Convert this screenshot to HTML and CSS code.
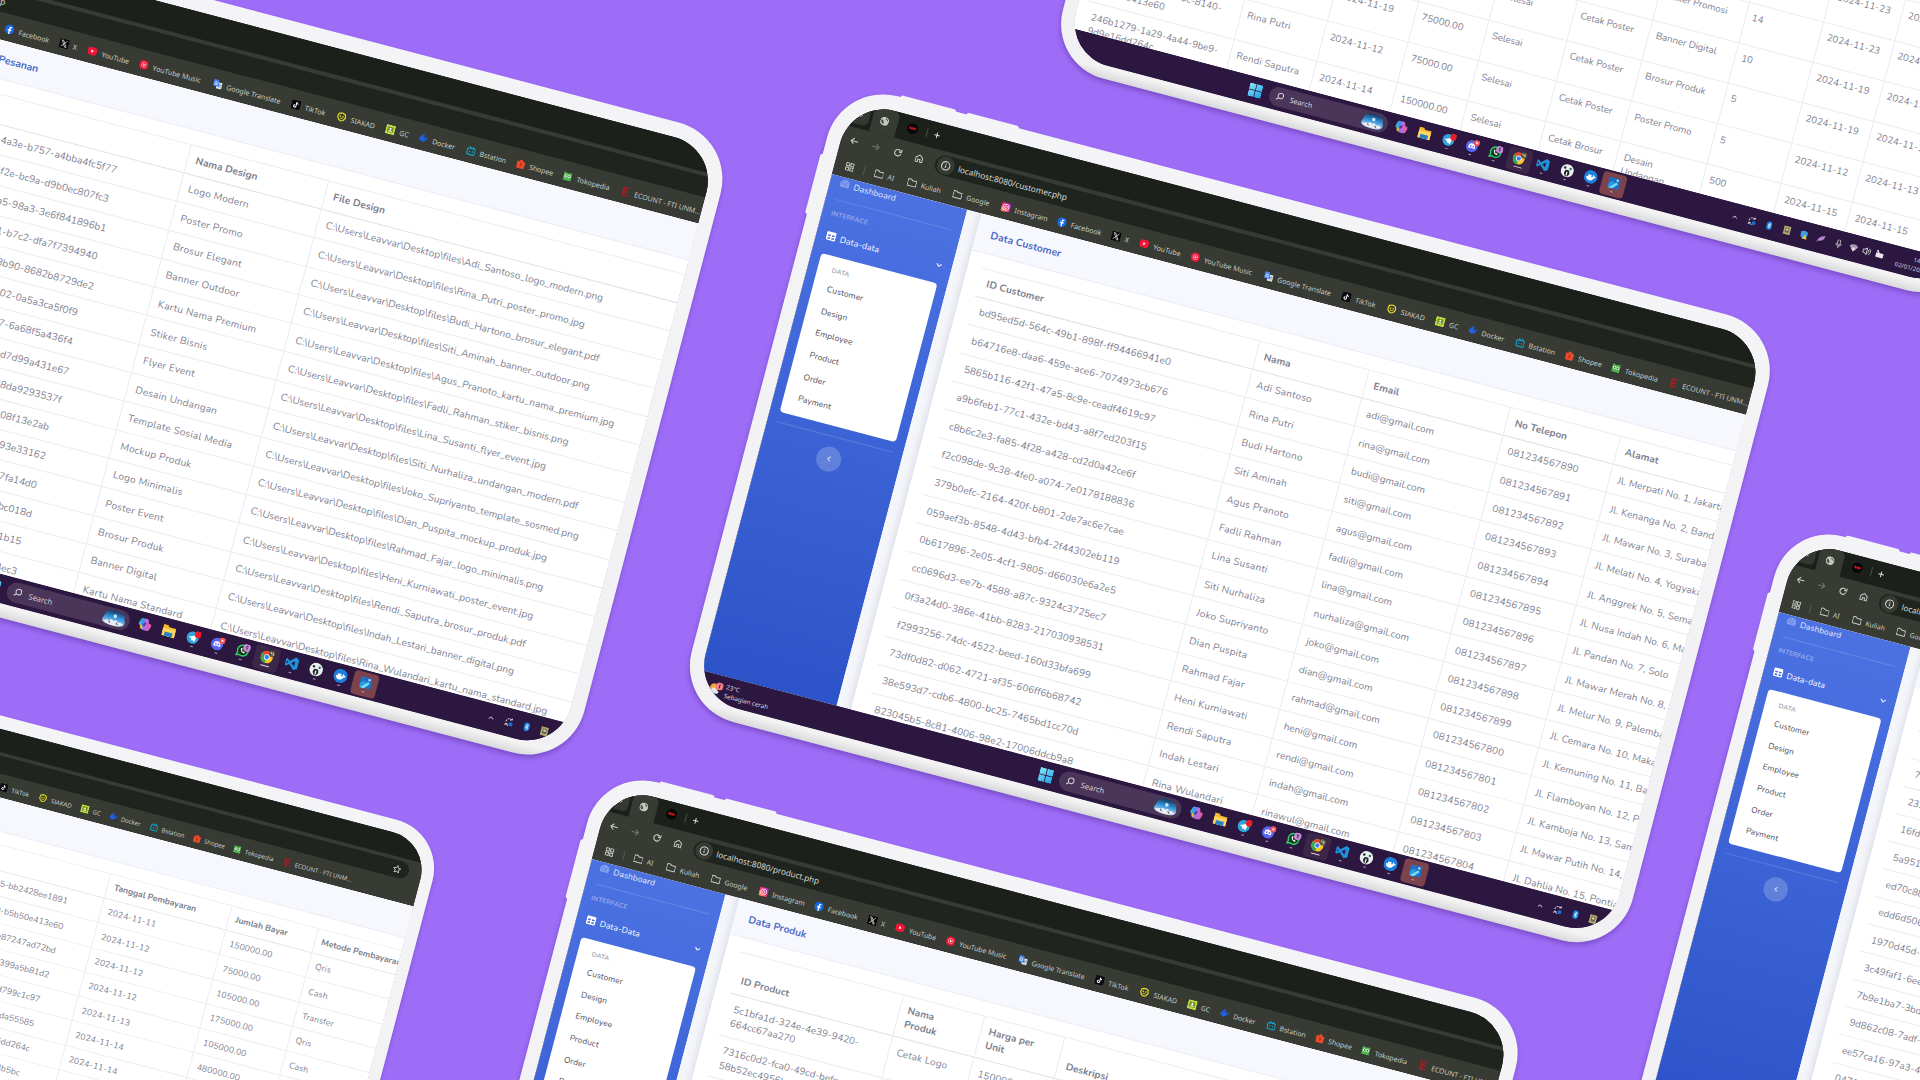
FILE: index.html
```html
<!DOCTYPE html>
<html lang="id">
<head>
<meta charset="utf-8">
<title>Data Customer</title>
<link rel="stylesheet" href="styles.css">
</head>
<body>
<svg class="sprite" aria-hidden="true">
  <defs>
    <linearGradient id="gInsta" x1="0" y1="1" x2="1" y2="0"><stop offset="0" stop-color="#ffc93c"/><stop offset=".45" stop-color="#f7276b"/><stop offset="1" stop-color="#a52be0"/></linearGradient>
    <linearGradient id="gCop" x1="0" y1="0" x2="1" y2="0"><stop offset="0" stop-color="#35c7c9"/><stop offset=".3" stop-color="#3d8ef0"/><stop offset=".55" stop-color="#b96be8"/><stop offset="1" stop-color="#f2568f"/></linearGradient>
    <linearGradient id="gWin" x1="0" y1="0" x2="1" y2="1"><stop offset="0" stop-color="#8be6fb"/><stop offset="1" stop-color="#1fa0e6"/></linearGradient>
    <linearGradient id="gScene" x1="0" y1="0" x2="0" y2="1"><stop offset="0" stop-color="#123a63"/><stop offset=".5" stop-color="#3c9be0"/><stop offset="1" stop-color="#d9dbe6"/></linearGradient>
  </defs>
  <symbol id="i-chev" viewBox="0 0 24 24"><path d="M4 8l8 8 8-8" fill="none" stroke="currentColor" stroke-width="3.4"/></symbol>
  <symbol id="i-left" viewBox="0 0 24 24"><path d="M15 5l-7 7 7 7" fill="none" stroke="currentColor" stroke-width="4"/></symbol>
  <symbol id="i-up" viewBox="0 0 24 24"><path d="M4 16l8-8 8 8" fill="none" stroke="currentColor" stroke-width="3"/></symbol>
  <symbol id="i-globe" viewBox="0 0 24 24"><circle cx="12" cy="12" r="12" fill="#c3c7c0"/><path d="M3 9c4 0 6 1 6 3s2 1 2 4-2 2-2 4C5 19 2 15 3 9zM14 3c-1 3 0 4 2 4s2 4 5 4c0-4-3-7-7-8z" fill="#4a4f48"/></symbol>
  <symbol id="i-red" viewBox="0 0 24 24"><circle cx="12" cy="12" r="12" fill="#070707"/><path d="M5 13l2-3 2 3 3-3 2 3 3-3 2 3" fill="none" stroke="#c9161e" stroke-width="3"/></symbol>
  <symbol id="i-plus" viewBox="0 0 24 24"><path d="M12 3v18M3 12h18" stroke="currentColor" stroke-width="3.2"/></symbol>
  <symbol id="i-back" viewBox="0 0 24 24"><path d="M22 12H3M11 4l-8 8 8 8" fill="none" stroke="currentColor" stroke-width="2.8"/></symbol>
  <symbol id="i-fwd" viewBox="0 0 24 24"><path d="M2 12h19M13 4l8 8-8 8" fill="none" stroke="currentColor" stroke-width="2.8"/></symbol>
  <symbol id="i-reload" viewBox="0 0 24 24"><path d="M20 13a8.5 8.5 0 1 1-2.4-7M21 2v7h-7" fill="none" stroke="currentColor" stroke-width="3"/></symbol>
  <symbol id="i-home" viewBox="0 0 24 24"><path d="M3 10l9-7 9 7v12h-6v-7H9v7H3z" fill="none" stroke="currentColor" stroke-width="2.6"/></symbol>
  <symbol id="i-info" viewBox="0 0 24 24"><circle cx="12" cy="12" r="10" fill="none" stroke="currentColor" stroke-width="2.6"/><path d="M12 11v6M12 6.5v2.5" stroke="currentColor" stroke-width="2.6"/></symbol>
  <symbol id="i-apps" viewBox="0 0 24 24"><path d="M2 2h8v8H2zM14 2h8v8h-8zM2 14h8v8H2zM14 14h8v8h-8z" fill="none" stroke="currentColor" stroke-width="2.6"/></symbol>
  <symbol id="i-folder" viewBox="0 0 24 24"><path d="M1 4h8l3 3h11v14H1z" fill="none" stroke="currentColor" stroke-width="2.6" stroke-linejoin="round"/></symbol>
  <symbol id="i-star" viewBox="0 0 24 24"><path d="M12 2l3 7 7 .7-5.300 4.800L18.300 22 12 18l-6.300 4 1.600-7.500L2 9.700 9 9z" fill="none" stroke="currentColor" stroke-width="2.2"/></symbol>
  <symbol id="i-instagram" viewBox="0 0 24 24"><rect width="24" height="24" rx="6" fill="url(#gInsta)"/><rect x="5" y="5" width="14" height="14" rx="4" fill="none" stroke="#fff" stroke-width="2"/><circle cx="12" cy="12" r="3.300" fill="none" stroke="#fff" stroke-width="2"/></symbol>
  <symbol id="i-facebook" viewBox="0 0 24 24"><circle cx="12" cy="12" r="12" fill="#1668e8"/><path d="M10.500 24v-8.500H7.500V12h3V9.500C10.500 6.500 12 5 15 5h2v3.300h-1.600c-1.300 0-1.600.6-1.600 1.600V12H17l-.5 3.500h-2.700V24z" fill="#fff"/></symbol>
  <symbol id="i-x" viewBox="0 0 24 24"><rect width="24" height="24" fill="#050505"/><path d="M5 4h4l10 16h-4zM19 4L5 20" fill="none" stroke="#ddd" stroke-width="1.800"/></symbol>
  <symbol id="i-youtube" viewBox="0 0 24 24"><rect x="0" y="2" width="24" height="20" rx="8" fill="#f01638"/><path d="M9.500 8l6.500 4-6.500 4z" fill="#fff"/></symbol>
  <symbol id="i-ytmusic" viewBox="0 0 24 24"><circle cx="12" cy="12" r="12" fill="#f01638"/><circle cx="12" cy="12" r="6" fill="none" stroke="#ffd0d6" stroke-width="1.500"/><path d="M10 8.500l5.500 3.500-5.500 3.500z" fill="#fff"/></symbol>
  <symbol id="i-translate" viewBox="0 0 24 24"><rect x="9" y="7" width="15" height="16" rx="2" fill="#dfe3ea"/><path d="M0 1h12l5 17H2a2 2 0 0 1-2-2z" fill="#4b86ee"/><path d="M10 9a3.500 3.500 0 1 0 .5 2H7.500" fill="none" stroke="#fff" stroke-width="1.600"/><path d="M15 13h7M18.500 11v2M21 13c-1 4-3 5-5 6" stroke="#777f8d" stroke-width="1.300" fill="none"/></symbol>
  <symbol id="i-tiktok" viewBox="0 0 24 24"><rect width="24" height="24" rx="5" fill="#0b0a10"/><path d="M13 5v10.500a3 3 0 1 1-3-3M13 5c.3 3 2 4.500 5 4.700" fill="none" stroke="#fff" stroke-width="2.600"/></symbol>
  <symbol id="i-siakad" viewBox="0 0 24 24"><path d="M12 2l8 3 2 8-4 7-6 3-6-3-4-7 2-8z" fill="none" stroke="#e2dc2b" stroke-width="3"/><circle cx="8.500" cy="11" r="2" fill="#e2dc2b"/><circle cx="15.500" cy="11" r="2" fill="#e2dc2b"/><path d="M8 16h8" stroke="#e2dc2b" stroke-width="2"/></symbol>
  <symbol id="i-gc" viewBox="0 0 24 24"><rect x="0" y="0" width="24" height="24" rx="2" fill="#c6dc3a"/><rect x="4.500" y="5" width="15" height="14" fill="#6b8f2a"/><circle cx="12" cy="10" r="2.600" fill="#fff"/><path d="M6.500 17c1-4 10-4 11 0z" fill="#fff"/></symbol>
  <symbol id="i-whale" viewBox="0 0 24 24"><path d="M1 11h17c1-2 1-3 0-4 2 0 3 1 4 3h2c-1 2-2 3-4 3-2 6-6 8-10 8-6 0-9-5-9-10zM4 6h10v5H4zM8 2h5v4H8z" fill="currentColor"/></symbol>
  <symbol id="i-bstation" viewBox="0 0 24 24"><rect x="2" y="6" width="20" height="16" rx="4" fill="none" stroke="#12a5cf" stroke-width="3"/><path d="M7 1l3 4M17 1l-3 4M8.500 12v4M15.500 12v4" stroke="#12a5cf" stroke-width="2.600"/></symbol>
  <symbol id="i-shopee" viewBox="0 0 24 24"><path d="M2 7h20l-1.500 16h-17zM8 7c0-7 8-7 8 0" fill="#ee4d2d" stroke="#ee4d2d" stroke-width="1.500"/><path d="M14.500 11c-5-2-5 2-2.500 3s3 4-2.500 3" fill="none" stroke="#8f2413" stroke-width="1.800"/></symbol>
  <symbol id="i-tokopedia" viewBox="0 0 24 24"><path d="M2 3c4 0 7 0 10 2 3-2 6-2 10-2v20H2z" fill="#4fb74f"/><circle cx="7.800" cy="12" r="3.800" fill="#e9ffe9"/><circle cx="16.200" cy="12" r="3.800" fill="#e9ffe9"/><circle cx="8.300" cy="12" r="1.700" fill="#1b3c1b"/><circle cx="15.700" cy="12" r="1.700" fill="#1b3c1b"/></symbol>
  <symbol id="i-ecount" viewBox="0 0 24 24"><path d="M19 2H6v20h13M6 12h11" fill="none" stroke="#9c1f26" stroke-width="5.500"/></symbol>
  <symbol id="i-gauge" viewBox="0 0 24 24"><path d="M3 20a11 11 0 1 1 18 0z" fill="currentColor"/><path d="M12 16l4-7" stroke="#4a6fdd" stroke-width="2"/><circle cx="6.500" cy="13" r="1.500" fill="#4a6fdd"/><circle cx="9" cy="8" r="1.500" fill="#4a6fdd"/></symbol>
  <symbol id="i-table" viewBox="0 0 24 24"><rect x="1" y="2" width="22" height="20" rx="3" fill="currentColor"/><path d="M4.500 9h6v3.500h-6zM13.500 9h6v3.500h-6zM4.500 15.500h6V19h-6zM13.500 15.500h6V19h-6z" fill="#4169dc"/></symbol>
  <symbol id="i-win" viewBox="0 0 24 24"><path d="M0 0h11.300v11.300H0zM12.700 0H24v11.300H12.700zM0 12.700h11.300V24H0zM12.700 12.700H24V24H12.700z" fill="url(#gWin)"/></symbol>
  <symbol id="i-search" viewBox="0 0 24 24"><circle cx="13" cy="10" r="7.500" fill="none" stroke="currentColor" stroke-width="2.600"/><path d="M8 16l-6 6" stroke="currentColor" stroke-width="3"/></symbol>
  <symbol id="i-scene" viewBox="0 0 40 28"><path d="M6 5c8-4 22-4 30 2l3 12c0 6-6 8-18 8S1 25 1 20z" fill="url(#gScene)"/><circle cx="21" cy="11" r="3" fill="#bfe9ff"/><path d="M3 22l6-3 4 1 3-3 4 2 4-2 4 3 4-1 5 3c-6 5-30 5-34 0z" fill="#e9edf4"/><path d="M12 21l3 2M25 21l3 3" stroke="#4b4660" stroke-width="1.600"/></symbol>
  <symbol id="i-copilot" viewBox="0 0 24 24"><path d="M8 2h6c2 0 3 1 3.500 3l1 4h1.500c3 0 4 2 3 5l-1.500 5c-.7 2-2 3-4 3h-6c-2 0-3-1-3.500-3l-1-4H5c-3 0-4-2-3-5l1.500-5C4.300 3 6 2 8 2z" fill="url(#gCop)"/><path d="M4 14h4l2 7H8c-3 0-3-3-4-7z" fill="#f5b13d"/><path d="M10.500 9h4l-2 6h-4z" fill="#2c1740" opacity=".6"/></symbol>
  <symbol id="i-files" viewBox="0 0 24 24"><path d="M1 3h8l2 3h12v16H1z" fill="#f4b92f"/><path d="M1 9h22v13H1z" fill="#ffd75e"/><path d="M5 15h14v7H5z" fill="#2b80c8"/></symbol>
  <symbol id="i-telegram" viewBox="0 0 24 24"><circle cx="11" cy="13" r="10.500" fill="#2ea3dc"/><path d="M4 13l14-6-3 13-4-3-2 2v-4z" fill="#fff"/><circle cx="19" cy="6" r="6" fill="#ee1c25"/></symbol>
  <symbol id="i-discord" viewBox="0 0 24 24"><circle cx="11" cy="13" r="10.500" fill="#5865f2"/><path d="M5 16c0-4 1-7 2-7 3-1 5-1 8 0 1 0 2 3 2 7-3 2-3 1-4 0H9c-1 1-1 2-4 0z" fill="#fff"/><circle cx="9" cy="13" r="1.500" fill="#5865f2"/><circle cx="13.500" cy="13" r="1.500" fill="#5865f2"/><circle cx="18.500" cy="5.500" r="5.500" fill="#f0525c"/><circle cx="18.500" cy="5.500" r="2" fill="#ffd9d9"/></symbol>
  <symbol id="i-whatsapp" viewBox="0 0 24 24"><path d="M2 22l1.600-5A9.200 9.200 0 1 1 7 20.500z" fill="#123320" stroke="#2ed06a" stroke-width="2.400"/><path d="M8 9c-1 5 3 8 7 8l1-2-3-1.500-1 1c-1-.5-2-1.500-2.300-2.500l1-1L9.500 8z" fill="#fff"/><circle cx="17.500" cy="6.500" r="6.500" fill="#c88bd6"/><path d="M19.500 4h-3v2.300c3-.5 3 3 0 2.700" fill="none" stroke="#3a1a46" stroke-width="1.300"/></symbol>
  <symbol id="i-chrome" viewBox="0 0 24 24"><circle cx="11" cy="13" r="10.500" fill="#fbc31c"/><path d="M11 13L2 7.500A10.500 10.500 0 0 1 20.500 8.500z" fill="#ea4335"/><path d="M11 13L2 7.500A10.500 10.500 0 0 0 10 23.500z" fill="#34a853"/><circle cx="11" cy="13" r="5" fill="#fff"/><circle cx="11" cy="13" r="3.800" fill="#3d7df0"/><circle cx="18.500" cy="5.500" r="5.500" fill="#5c5a3f"/><path d="M16 3l2 3M20 3l1 5" stroke="#ddd" stroke-width="1.500"/></symbol>
  <symbol id="i-vscode" viewBox="0 0 24 24"><path d="M17 1l6 3v16l-6 3-9-8.500-5 4-2-1.200V6.700l2-1.200 5 4z" fill="#1f93dc"/><path d="M17 7.500v9L11 12zM3 9.500v5L5.500 12z" fill="#2c1740"/></symbol>
  <symbol id="i-panda" viewBox="0 0 24 24"><circle cx="12" cy="12" r="11.500" fill="#e9f1ee"/><path d="M8 13c0-3 8-3 8 0l1 4-3 5h-4l-3-5z" fill="#26292c"/><path d="M11 14h2v7h-2z" fill="#fff"/><circle cx="7" cy="7.500" r="2.200" fill="#26292c"/><circle cx="17" cy="7.500" r="2.200" fill="#3d6c5f"/></symbol>
  <symbol id="i-dockerd" viewBox="0 0 24 24"><circle cx="12" cy="12" r="12" fill="#1d7fe0"/><path d="M4 12h11c1-2 1-3 0-4 2 0 3 1 3.500 2.500H21c-1 2-2 3-3.500 3-1.500 4-4 5-7 5-4 0-6.500-3-6.500-6.500zM7 8.500h6V12H7z" fill="#fff"/></symbol>
  <symbol id="i-photo" viewBox="0 0 24 24"><rect x="2" y="3" width="20" height="19" rx="2" fill="#1d6fc4"/><path d="M3 22l13-12 3 3-8 9z" fill="#6fdcf8"/><path d="M3 14l6-5 4 3-10 9z" fill="#2a9be4"/><circle cx="17" cy="6.500" r="2" fill="#cfe9f7"/></symbol>
  <symbol id="i-sync" viewBox="0 0 24 24"><path d="M3 12a9 9 0 0 1 15-6.500M18 1v5h-5" fill="none" stroke="#d8d2de" stroke-width="2.400" stroke-dasharray="5 2"/><path d="M3 22v-5h6M4 17a9 9 0 0 0 8 4" fill="none" stroke="#d8d2de" stroke-width="2.200"/><circle cx="16.500" cy="16.500" r="5" fill="#1c6fd0"/></symbol>
  <symbol id="i-bt" viewBox="0 0 24 24"><rect x="5" y="1" width="14" height="22" rx="7" fill="#1684e0"/><path d="M8.500 8.500l7 7L12 18.500v-13l3.500 3-7 7" fill="none" stroke="#fff" stroke-width="1.500"/></symbol>
  <symbol id="i-card" viewBox="0 0 24 24"><rect x="3" y="1" width="18" height="22" fill="#b7a869"/><rect x="7" y="5" width="10" height="13" fill="#5c6a5d"/><circle cx="12" cy="10" r="3" fill="#e3dcae"/></symbol>
  <symbol id="i-shield" viewBox="0 0 24 24"><path d="M12 1l9 3v8c0 6-4 9-9 11-5-2-9-5-9-11V4z" fill="#3c9fe0"/><path d="M15 11l7 12H9z" fill="#f7c62d"/></symbol>
  <symbol id="i-feather" viewBox="0 0 24 24"><path d="M2 22C5 9 12 3 22 2c0 9-8 15-16 15z" fill="#b58ad0"/></symbol>
  <symbol id="i-mic" viewBox="0 0 24 24"><rect x="8.500" y="1" width="7" height="14" rx="3.500" fill="none" stroke="#ddd" stroke-width="2"/><path d="M5 11c0 9 14 9 14 0M12 18v5" fill="none" stroke="#ddd" stroke-width="2"/></symbol>
  <symbol id="i-wifi" viewBox="0 0 24 24"><path d="M0 8c7-7 17-7 24 0L12 22z" fill="#a89cb3"/><path d="M6 14c3-4 9-4 12 0l-6 8z" fill="#ddd6e4"/></symbol>
  <symbol id="i-vol" viewBox="0 0 24 24"><path d="M2 8h4l6-5v18l-6-5H2zM15 8c3 3 3 5 0 8M18 4c5 5 5 11 0 16" fill="none" stroke="#ddd" stroke-width="2.200"/></symbol>
  <symbol id="i-bat" viewBox="0 0 24 24"><rect x="1" y="8" width="20" height="12" rx="2" fill="#e9e4ee"/><path d="M3 1l6 9" stroke="#e9e4ee" stroke-width="4"/></symbol>
  <symbol id="i-weather" viewBox="0 0 28 28"><circle cx="10" cy="13" r="8.500" fill="#f2a437"/><path d="M5 24c-5 0-5-7 0-7 1-5 9-5 10 0 7-1 7 7 1 7z" fill="#dfe9f7"/><circle cx="20" cy="8" r="7.500" fill="#f2808a"/><path d="M20 4v8" stroke="#4d1420" stroke-width="1.800"/></symbol>
</svg>
<main class="board" id="board"></main>
<script src="app.js"></script>
</body>
</html>
```
FILE: styles.css
```css
* { box-sizing: border-box; }

html, body { margin: 0; height: 100%; }

body {
  background: #9e6df8;
  overflow: hidden;
  font-family: "Nunito", "Lato", "Open Sans", sans-serif;
}

.sprite { position: absolute; width: 0; height: 0; }

.board {
  position: relative;
  width: 1920px;
  height: 1080px;
  overflow: hidden;
}

.tablet {
  position: absolute;
  width: 972.5px;
  height: 646.500px;
  padding: 15px 13.5px 13.5px;
  border-radius: 58px;
  background: linear-gradient(to bottom, #f4f4f6 0, #f1f1f4 97%, #f3f3f3 98.300%, #d9d9dc 100%);
  box-shadow: 0 3px 5px rgba(62, 30, 120, .38);
  transform-origin: 13.5px 91.5px;
  transform: rotate(14.75deg) scale(var(--zoom, 1));
}
.tablet--customer { left: 818px; top: 82px; }
.tablet--design { left: -235.8px; top: -110.6px; --zoom: 1.007; }
.tablet--product { left: 578.3px; top: 767px; --zoom: .987; }
.tablet--employee { left: 1765px; top: 519.5px; --zoom: .973; }
.tablet--order { left: 1185.2px; top: -545px; --zoom: .97; --shift: -160.7px; }
.tablet--payment { left: -392px; top: 606px; --zoom: .866; --shift: -76px; }

.key { position: absolute; background: #f4f4f6; }
.key--a { left: 61px; top: -2px; width: 57px; height: 4px; border-radius: 2px 2px 0 0; }
.key--b { left: 129px; top: -2px; width: 54px; height: 4px; border-radius: 2px 2px 0 0; }
.key--c { left: -2.5px; top: 74.5px; width: 5px; height: 62px; border-radius: 2px 0 0 2px; }

.screen {
  width: 945.5px;
  height: 618px;
  border-radius: 45px;
  overflow: hidden;
  background: #2c1740;
}

.desktop {
  width: 1098px;
  height: 618px;
  margin-left: var(--shift, 0);
  display: flex;
  flex-direction: column;
}

svg.icon { display: block; width: 9px; height: 9px; flex: none; }

/* Browser */
.browser {
  height: 76.5px;
  flex: none;
  display: flex;
  flex-direction: column;
  background: #373b34;
  color: #c9ccc6;
  font-family: "Noto Sans", sans-serif;
}
.tabs {
  height: 25.5px;
  background: #1b201a;
  display: flex;
  align-items: center;
  padding-left: 4px;
}
.tabs__menu {
  width: 18px; height: 18px; border-radius: 5px;
  background: #343831; display: grid; place-items: center; margin-right: 3px;
}
.tabs__menu .icon { width: 6px; height: 6px; }
.tabs__active {
  width: 26px; height: 25.5px; border-radius: 6px 6px 0 0;
  background: #373b34; display: grid; place-items: center; margin-right: 10px;
}
.tabs__red { width: 11px; height: 11px; margin-right: 9px; }
.tabs__red .icon { width: 11px; height: 11px; }
.tabs__sep { width: 1px; height: 9px; background: #4a4f47; margin-right: 6.500px; }
.tabs .icon--plus { width: 7.500px; height: 7.500px; color: #e1e3df; }

.toolbar {
  height: 28px;
  display: flex;
  align-items: center;
  padding-left: 9px;
}
.toolbar .icon { margin-right: 13.600px; }
.toolbar .icon--dim { color: #73776f; }
.address {
  width: 909px; height: 20px; border-radius: 10px;
  background: #1f241e;
  display: flex; align-items: center;
  padding: 0 9px 0 1.500px;
  margin-left: -1.500px;
  font-size: 8.300px;
  color: #d9dbd6;
}
.address__info {
  width: 18px; height: 18px; border-radius: 50%;
  background: #363a33; display: grid; place-items: center; margin-right: 4px;
}
.address .icon { margin: 0; width: 10px; height: 10px; }
.address .icon--star { margin-left: auto; }

.bookmarks {
  height: 23px;
  display: flex;
  align-items: center;
  padding-left: 11px;
  font-size: 7px;
}
.bookmarks__sep { width: 1px; height: 9px; background: #555a51; margin: 0 9.600px 0 10.500px; }
.bookmarks__list {
  display: grid;
  grid-template-columns: 34.6px 47px 49.9px 58.1px 55.9px 29.3px 52.6px 75.7px 80.6px 47.2px 49.9px 33.7px 48.6px 51px 48.7px 59.3px 100px;
}
.bookmark { display: flex; align-items: center; gap: 4.500px; white-space: nowrap; }
.bookmark .icon { width: 9.500px; height: 9.500px; }
.icon--docker { color: #1f5fe0; }

/* Page */
.page { height: 513px; flex: none; display: flex; background: #f8f9fc; overflow: hidden; }

.sidebar {
  width: 140.7px;
  flex: none;
  background: linear-gradient(to bottom, #4c72e2 0, #3f66d8 40%, #2c54c8 100%);
  padding: 0 10px;
  color: #fff;
  display: flex;
  flex-direction: column;
  font-size: 8.600px;
  letter-spacing: .15px;
}
.sidebar__link { height: 14px; display: flex; align-items: center; gap: 4.500px; color: #e8edfb; }
.sidebar__link .icon { width: 10.5px; height: 10.5px; }
.icon--faded { opacity: .35; }
.sidebar__link .icon--chev { margin-left: auto; width: 7.500px; height: 7.500px; }
.sidebar__link--open { color: #fff; margin: 11px 0 11px; }
.sidebar__rule { height: 1px; flex: none; background: rgba(255, 255, 255, .16); }
.sidebar__rule--top { margin: 9px 0; }
.sidebar__head { height: 10px; line-height: 10px; font-size: 6.700px; font-weight: 700; color: rgba(255, 255, 255, .42); }
.submenu {
  height: 164px;
  border-radius: 4px;
  background: #fff;
  padding: 9px 15px 0;
  color: #4a4b58;
  font-size: 8.400px;
  margin-bottom: 10px;
}
.submenu__head { height: 10px; line-height: 10px; margin-bottom: 4.500px; font-size: 6.500px; color: #a7a9b6; font-weight: 700; }
.submenu__item { height: 22.7px; line-height: 22.7px; }
.sidebar__toggle {
  width: 25px; height: 25px; border-radius: 50%;
  margin: 10px auto 0;
  background: rgba(255, 255, 255, .2);
  color: rgba(255, 255, 255, .6);
  display: grid; place-items: center;
}
.sidebar__toggle .icon { width: 8px; height: 8px; }

.content {
  flex: 1;
  min-width: 0;
  padding-left: 14.5px;
  background: linear-gradient(to right, #f6f7fb 0, #f3f4f9 8px, #e3e5ee 14.5px, #fff 15px);
  display: flex;
  flex-direction: column;
}
.content--end { justify-content: flex-end; }
.content--end .card { margin-bottom: -13px; min-height: 0; }
.card { background: #fff; flex: none; min-height: 100%; }
.card__title {
  height: 38.700px;
  background: #f7f8fd;
  border-bottom: 1px solid #eceef5;
  padding-left: 14.500px;
  line-height: 37px;
  font-size: 10.400px;
  font-weight: 700;
  color: #4c6cc6;
}
.card__body { padding: 13.500px 0 0 14.500px; }

.table {
  table-layout: fixed;
  border-collapse: separate;
  border-spacing: 0;
  width: 100%;
  font-size: 10px;
  line-height: 14.300px;
  letter-spacing: .12px;
  color: #7f8191;
  border-top: 1px solid #eceef4;
}
.table th, .table td {
  padding: 7.500px 0 6.500px 7.500px;
  text-align: left;
  vertical-align: top;
  border-bottom: 1px solid #eaecf2;
  border-left: 1px solid #eaecf2;
  white-space: nowrap;
  font-weight: 400;
}
.table th { vertical-align: bottom; font-weight: 700; color: #7c7e8c; border-bottom: 1.500px solid #dfe2ec; letter-spacing: .1px; }
.table th:first-child, .table td:first-child { border-left-color: transparent; }
.table td:first-child { letter-spacing: .03px; }
.table td:nth-child(2) { letter-spacing: .25px; }
.table--pay th { letter-spacing: 0; }
.table--pay td:nth-child(2) { letter-spacing: .03px; }
.table--wrap th, .table--wrap td { white-space: pre-line; }
.table--files td:last-child { letter-spacing: .07px; }
.table--orders td { line-height: 14.100px; padding-left: 6.500px; letter-spacing: 0; }

.scroll { width: 8px; padding: 476px 0 0 1px; flex: none; background: #fff; }
.scroll__thumb { height: 26px; border-radius: 4px; background: #8d8f96; }
.page--scroll .content { flex: none; width: 920px; overflow: hidden; }

/* Taskbar */
.taskbar {
  flex: 1;
  display: flex;
  align-items: center;
  background: #2c1740;
  color: #d9d3df;
  font-family: "Noto Sans", sans-serif;
  font-size: 6.300px;
}
.weather { width: 353.6px; padding-left: 12px; display: flex; align-items: center; gap: 3px; line-height: 9px; }
.weather .icon { width: 14px; height: 14px; }
.taskbar .icon--win { width: 14px; height: 14px; }
.search {
  width: 126px; height: 20px; border-radius: 10px;
  margin: 0 1.800px 0 7.400px;
  padding: 0 4px 0 7px;
  background: #4a3659;
  display: flex; align-items: center;
  font-size: 7.600px;
}
.search .icon { margin-right: 6px; }
.search .icon--scene { width: 24px; height: 17px; margin: 0 0 0 auto; }
.app { width: 25.2px; height: 24px; display: flex; flex-direction: column; align-items: center; justify-content: center; gap: 2px; border-radius: 4px; }
.app .icon { width: 14px; height: 14px; }
.app__dot { width: 3px; height: 1.200px; background: #a79fb0; border-radius: 1px; }
.app--plain .app__dot { visibility: hidden; }
.app--chrome { background: #3c2748; }
.app--chrome .app__dot { width: 9px; background: #e5cfe5; }
.app--photo { background: #7c434c; }
.tray { display: flex; margin-left: 108px; align-items: center; }
.tray__item { width: 18.3px; display: grid; place-items: center; }
.tray__item .icon { width: 9.500px; height: 9.500px; }
.tray__item:first-child .icon { width: 6.500px; height: 6.500px; }
.tray__item--tight { width: 14px; }
.clock { margin-left: 6px; width: 38px; text-align: right; line-height: 9px; }
```
FILE: app.js
```js
const icon = (name, cls = '') =>
  `<svg class="icon ${cls}"><use href="#i-${name}"/></svg>`;

const bookmarks = [
  ['folder', 'AI'], ['folder', 'Kuliah'], ['folder', 'Google'],
  ['instagram', 'Instagram'], ['facebook', 'Facebook'], ['x', 'X'],
  ['youtube', 'YouTube'], ['ytmusic', 'YouTube Music'],
  ['translate', 'Google Translate'], ['tiktok', 'TikTok'],
  ['siakad', 'SIAKAD'], ['gc', 'GC'], ['whale', 'Docker', 'icon--docker'],
  ['bstation', 'Bstation'], ['shopee', 'Shopee'],
  ['tokopedia', 'Tokopedia'], ['ecount', 'ECOUNT - FTI UNM...'],
];

const apps = ['copilot', 'files', 'telegram', 'discord', 'whatsapp', 'chrome', 'vscode', 'panda', 'dockerd', 'photo'];
const tray = ['up', 'sync', 'bt', 'card', 'shield', 'feather', 'mic'];
const menu = ['Customer', 'Design', 'Employee', 'Product', 'Order', 'Payment'];

const browser = (path) => `
  <header class="browser">
    <div class="tabs">
      <span class="tabs__menu">${icon('chev')}</span>
      <span class="tabs__active">${icon('globe')}</span>
      <span class="tabs__red">${icon('red')}</span>
      <span class="tabs__sep"></span>${icon('plus', 'icon--plus')}
    </div>
    <div class="toolbar">
      ${icon('back')}${icon('fwd', 'icon--dim')}${icon('reload')}${icon('home')}
      <div class="address"><span class="address__info">${icon('info')}</span>localhost:8080/${path}${icon('star', 'icon--star')}</div>
    </div>
    <div class="bookmarks">
      ${icon('apps')}<span class="bookmarks__sep"></span>
      <div class="bookmarks__list">
        ${bookmarks.map(([i, t, c]) => `<span class="bookmark">${icon(i, c)}${t}</span>`).join('')}
      </div>
    </div>
  </header>`;

const sidebar = (label) => `
  <nav class="sidebar">
    <div class="sidebar__link">${icon('gauge', 'icon--faded')}Dashboard</div>
    <div class="sidebar__rule sidebar__rule--top"></div>
    <div class="sidebar__head">INTERFACE</div>
    <div class="sidebar__link sidebar__link--open">${icon('table')}${label}${icon('chev', 'icon--chev')}</div>
    <div class="submenu">
      <div class="submenu__head">DATA</div>
      ${menu.map((m) => `<div class="submenu__item">${m}</div>`).join('')}
    </div>
    <div class="sidebar__rule"></div>
    <div class="sidebar__toggle">${icon('left')}</div>
  </nav>`;

const taskbar = `
  <footer class="taskbar">
    <div class="weather">${icon('weather')}<div>23°C<br>Sebagian cerah</div></div>
    ${icon('win', 'icon--win')}
    <div class="search">${icon('search')}Search${icon('scene', 'icon--scene')}</div>
    ${apps.map((a, n) => `<div class="app app--${a} ${n < 2 ? 'app--plain' : ''}">${icon(a)}<span class="app__dot"></span></div>`).join('')}
    <div class="tray">
      ${tray.map((t) => `<span class="tray__item">${icon(t)}</span>`).join('')}
      ${['wifi', 'vol', 'bat'].map((t) => `<span class="tray__item tray__item--tight">${icon(t)}</span>`).join('')}
      <div class="clock">14.22<br>02/01/2025</div>
    </div>
  </footer>`;

const table = ({ cols, head, rows, variant = '' }) => `
  <table class="table ${variant}">
    <colgroup>${cols.map((w) => `<col style="width:${w}px">`).join('')}<col></colgroup>
    <thead><tr>${head.map((h) => `<th>${h}</th>`).join('')}</tr></thead>
    <tbody>${rows.map((r) => `<tr>${r.map((c) => `<td>${c}</td>`).join('')}</tr>`).join('')}</tbody>
  </table>`;

const tablet = (t) => `
  <section class="tablet tablet--${t.name}">
    <i class="key key--a"></i><i class="key key--b"></i><i class="key key--c"></i>
    <div class="screen"><div class="desktop">
      ${browser(t.path)}
      <div class="page ${t.scroll ? 'page--scroll' : ''}">
        ${sidebar(t.label || 'Data-data')}
        <div class="content ${t.scroll ? 'content--end' : ''}">
          <div class="card">
            <div class="card__title">${t.title}</div>
            <div class="card__body">${table(t)}</div>
          </div>
        </div>
        ${t.scroll ? '<div class="scroll"><div class="scroll__thumb"></div></div>' : ''}
      </div>
      ${taskbar}
    </div></div>
  </section>`;

const customers = [
  ['bd95ed5d-564c-49b1-898f-ff94466941e0', 'Adi Santoso', 'adi', 'Jl. Merpati No. 1, Jakarta'],
  ['b64716e8-daa6-459e-ace6-7074973cb676', 'Rina Putri', 'rina', 'Jl. Kenanga No. 2, Bandung'],
  ['5865b116-42f1-47a5-8c9e-ceadf4619c97', 'Budi Hartono', 'budi', 'Jl. Mawar No. 3, Surabaya'],
  ['a9b6feb1-77c1-432e-bd43-a8f7ed203f15', 'Siti Aminah', 'siti', 'Jl. Melati No. 4, Yogyakarta'],
  ['c8b6c2e3-fa85-4f28-a428-cd2d0a42ce6f', 'Agus Pranoto', 'agus', 'Jl. Anggrek No. 5, Semarang'],
  ['f2c098de-9c38-4fe0-a074-7e0178188836', 'Fadli Rahman', 'fadli', 'Jl. Nusa Indah No. 6, Malang'],
  ['379b0efc-2164-420f-b801-2de7ac6e7cae', 'Lina Susanti', 'lina', 'Jl. Pandan No. 7, Solo'],
  ['059aef3b-8548-4d43-bfb4-2f44302eb119', 'Siti Nurhaliza', 'nurhaliza', 'Jl. Mawar Merah No. 8, Medan'],
  ['0b617896-2e05-4cf1-9805-d66030e6a2e5', 'Joko Supriyanto', 'joko', 'Jl. Melur No. 9, Palembang'],
  ['cc0696d3-ee7b-4588-a87c-9324c3725ec7', 'Dian Puspita', 'dian', 'Jl. Cemara No. 10, Makassar'],
  ['0f3a24d0-386e-41bb-8283-217030938531', 'Rahmad Fajar', 'rahmad', 'Jl. Kemuning No. 11, Bali'],
  ['f2993256-74dc-4522-beed-160d33bfa699', 'Heni Kurniawati', 'heni', 'Jl. Flamboyan No. 12, Padang'],
  ['73df0d82-d062-4721-af35-606ff6b68742', 'Rendi Saputra', 'rendi', 'Jl. Kamboja No. 13, Samarinda'],
  ['38e593d7-cdb6-4800-bc25-7465bd1cc70d', 'Indah Lestari', 'indah', 'Jl. Mawar Putih No. 14, Batam'],
  ['823045b5-8c81-4006-98e2-17006ddcb9a8', 'Rina Wulandari', 'rinawul', 'Jl. Dahlia No. 15, Pontianak'],
].map(([id, name, mail, addr], n) =>
  [id, name, `${mail}@gmail.com`, `0812345678${n < 10 ? 90 + n : '0' + (n - 10)}`, addr]);

const designs = [
  ['6b1f20c4-9d17-4a3e-b757-a4bba4fc5f77', 'Logo Modern', 'Adi_Santoso_logo_modern.png'],
  ['c03e7a51-6b28-4f2e-bc9a-d9b0ec807fc3', 'Poster Promo', 'Rina_Putri_poster_promo.jpg'],
  ['19d4c8e2-07fb-41a5-98a3-3e6f841896b1', 'Brosur Elegant', 'Budi_Hartono_brosur_elegant.pdf'],
  ['e5a90b73-c4d6-4e81-b7c2-dfa7f7394940', 'Banner Outdoor', 'Siti_Aminah_banner_outdoor.png'],
  ['20fd6e98-b135-47ca-8b90-8682b8729de2', 'Kartu Nama Premium', 'Agus_Pranoto_kartu_nama_premium.jpg'],
  ['7ac35d01-e48f-4b92-ae02-0a5a3ca5f0f9', 'Stiker Bisnis', 'Fadli_Rahman_stiker_bisnis.png'],
  ['d81b64fa-3c70-4d5e-9ba7-6a68f5a436f4', 'Flyer Event', 'Lina_Susanti_flyer_event.jpg'],
  ['43e7f9b0-a26c-4018-85ce-d7d99a431e67', 'Desain Undangan', 'Siti_Nurhaliza_undangan_modern.pdf'],
  ['f60c2d85-19be-4a73-bd14-58da9293537f', 'Template Sosial Media', 'Joko_Supriyanto_template_sosmed.png'],
  ['8b95e14c-d703-4f6a-a3f8-c2908f13e2ab', 'Mockup Produk', 'Dian_Puspita_mockup_produk.jpg'],
  ['05da7c3e-68f1-4be9-9260-e4fb93e33162', 'Logo Minimalis', 'Rahmad_Fajar_logo_minimalis.png'],
  ['b2f84096-5ead-43c7-8d1b-60a9c7fa14d0', 'Poster Event', 'Heni_Kurniawati_poster_event.jpg'],
  ['5e61ab3d-f094-4c28-b57e-91d3e8bc018d', 'Brosur Produk', 'Rendi_Saputra_brosur_produk.pdf'],
  ['91c70fd4-2b8e-4560-a9ec-7f32c04d1b15', 'Banner Digital', 'Indah_Lestari_banner_digital.png'],
  ['ac3d58e7-7140-4f9b-86d2-b05e91743ec3', 'Kartu Nama Standard', 'Rina_Wulandari_kartu_nama_standard.jpg'],
].map(([id, name, file]) => [id, name, `C:\\Users\\Leavvar\\Desktop\\files\\${file}`]);

const products = [
  ['5c1bfa1d-324e-4e39-9420-\n664cc67aa270', 'Cetak Logo', '150000.00', 'Logo modern'],
  ['7316c0d2-fca0-49cd-befe-\n58b52ec4956b', 'Cetak Poster', '75000.00', 'Poster promo'],
  ['c2f04d1b-9a63-4e57-8a1c-\n7d90be3f6a12', 'Cetak Brosur', '50000.00', 'Brosur produk'],
];

const employees = [
  'b7d1c5f0-29ae-4c86-91fd-3e58a6c0d742', '7f40e2b9-8c13-4d65-a0be-f2197cd3e584',
  '233c9d7e-f1a8-40b6-8e52-6ad0b94c71fe', '16fd4b80-5e9c-43d7-b6a1-08cf3e72d59a',
  '5a951c3e-d740-4f82-9cb6-e13a7f05b8d4', 'ed70c88f-24b1-4e9a-85d3-b6f0c1e7294a',
  'edd6d506-a38f-4c17-b2e9-50d81f6ca73b', '1970d45d-c6e2-4b50-9f38-da7e04b1c865',
  '3c49faf1-6ee4-4d1b-a97c-82b5f0d36e1c', '7b9e1ba7-3bd5-4fa0-8c62-1e9d4c70b5af',
  '9d862c08-7adf-4e3c-b15a-f60c8e2d7b94', 'ee57ca16-97a3-4b8d-a0f4-c35b1d9e6f28',
  '04712fbd-8e5c-4a69-93d0-7be1f24ac0d6', 'c68a03d5-b1f7-4e24-8d9b-5f30ae7c192e',
  '58be9f42-0d6a-4c71-b3e8-a94c7d15f06b',
].map((id) => [id, '', '']);

const orders = [
  ['e80b6c2f-3d91-47a5-b64e-\n5c2f9a17d0e3', 'Siti Nurhaliza', '2024-11-20', '50000.00', 'Selesai', 'Cetak Stiker', 'Flyer\nEvent', '20', '2024-11-23', '2024-11-23'],
  ['a41c07e9-52bd-4f36-90ce-\n1b7fd08a35c6', 'Joko Supriyanto', '2024-11-20', '50000.00', 'Selesai', 'Cetak Stiker', 'Stiker Bisnis', '20', '2024-11-23', '2024-11-23'],
  ['6e92d5b8-c07f-4a1d-8be3-\nf54a90c2e7d1', 'Dian Puspita', '2024-11-19', '75000.00', 'Selesai', 'Cetak Poster', 'Stiker Promosi', '14', '2024-11-23', '2024-11-23'],
  ['d03b7fa6-18ce-4952-a7d4-\n80e5c1f96b2a', 'Rahmad Fajar', '2024-11-19', '75000.00', 'Selesai', 'Cetak Poster', 'Banner Digital', '10', '2024-11-19', '2024-11-19'],
  ['2f58c1de-a9b4-4e07-b6f0-\n3d7ea2c8054b', 'Heni Kurniawati', '2024-11-19', '75000.00', 'Selesai', 'Cetak Poster', 'Brosur Produk', '5', '2024-11-19', '2024-11-19'],
  ['97ea04c3-fd61-4f6c-8140-\nb5b50e413e60', 'Rina Putri', '2024-11-12', '75000.00', 'Selesai', 'Cetak Poster', 'Poster Promo', '5', '2024-11-12', '2024-11-13'],
  ['246b1279-1a29-4a44-9be9-\n9d9e16dd264c', 'Rendi Saputra', '2024-11-14', '150000.00', 'Selesai', 'Cetak Brosur', 'Desain\nUndangan', '500', '2024-11-15', '2024-11-15'],
];

const payments = [
  ['3f55-bb2428ee1891', '2024-11-11', '150000.00', 'Qris'],
  ['8140-b5b50e413e60', '2024-11-12', '75000.00', 'Cash'],
  ['92c6-e87247ad72bd', '2024-11-12', '105000.00', 'Transfer'],
  ['a0d7-4c399a5b81d2', '2024-11-12', '175000.00', 'Qris'],
  ['b81e-f02d799c1c97', '2024-11-13', '105000.00', 'Cash'],
  ['8f3b-61ce0da55585', '2024-11-14', '480000.00', 'Qris'],
  ['9be9-9d9e16dd264c', '2024-11-14', '150000.00', 'Cash'],
  ['a47c-d18f60e3b5bc', '2024-11-15', '50000.00', 'Qris'],
  ['94d2-3e70bc15fa86', '2024-11-15', '75000.00', 'Cash'],
].map(([id, date, sum, way], n) => [`c${n}5e81d0-7ab4-4f2c-9e16-b03d7f8a42e${n}`, `d7${n}b06f4-4e1a-4c58-${id}`, date, sum, way]);

document.getElementById('board').innerHTML = [
  { name: 'design', path: 'design.php', title: 'Data Design Pesanan', variant: 'table--files',
    cols: [269.1, 141.2], head: ['ID Design', 'Nama Design', 'File Design'], rows: designs },
  { name: 'order', path: 'order.php', title: 'Data Pesanan', variant: 'table--wrap table--orders', scroll: true,
    cols: [155.1, 88.2, 86.3, 75.2, 82.7, 80.5, 91.1, 79.8, 75.2],
    head: ['ID Pesanan', 'Nama', 'Tanggal', 'Total', 'Status', 'Produk', 'Design', 'Jumlah', 'Mulai', 'Selesai'], rows: orders },
  { name: 'payment', path: 'payment.php', title: 'Data Pembayaran', variant: 'table--pay',
    cols: [256, 247.8, 145.2, 102.5], head: ['ID Pembayaran', 'ID Pesanan', 'Tanggal Pembayaran', 'Jumlah Bayar', 'Metode Pembayaran'], rows: payments },
  { name: 'product', path: 'product.php', title: 'Data Produk', label: 'Data-Data', variant: 'table--wrap',
    cols: [171, 84.8, 84.5], head: ['ID Product', 'Nama\nProduk', 'Harga per\nUnit', 'Deskripsi'], rows: products },
  { name: 'employee', path: 'employee.php', title: 'Data Employee',
    cols: [286.8, 120], head: ['ID Employee', 'Nama', 'Jabatan'], rows: employees },
  { name: 'customer', path: 'customer.php', title: 'Data Customer',
    cols: [286.8, 113.4, 146.1, 113.9], head: ['ID Customer', 'Nama', 'Email', 'No Telepon', 'Alamat'], rows: customers },
].map(tablet).join('');
```
